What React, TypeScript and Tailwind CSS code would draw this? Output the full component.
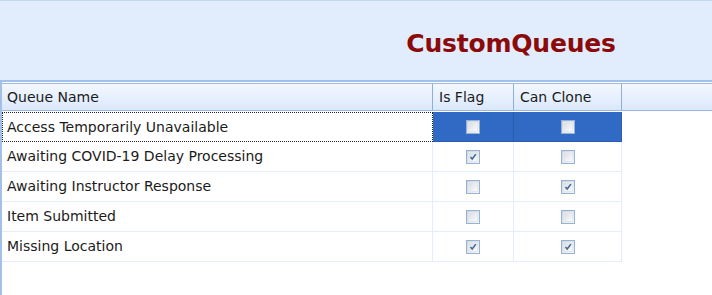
import React from "react";

type Row = { name: string; isFlag: boolean; canClone: boolean };

const rows: Row[] = [
  { name: "Access Temporarily Unavailable", isFlag: false, canClone: false },
  { name: "Awaiting COVID-19 Delay Processing", isFlag: true, canClone: false },
  { name: "Awaiting Instructor Response", isFlag: false, canClone: true },
  { name: "Item Submitted", isFlag: false, canClone: false },
  { name: "Missing Location", isFlag: true, canClone: true },
];

function CheckBox({ checked }: { checked: boolean }) {
  return (
    <span className="flex h-[14px] w-[14px] items-center justify-center border border-[#97b2d2] bg-gradient-to-br from-[#c9d2dc] to-[#f7f8fa] p-[1px]">
      <span className="flex h-full w-full items-center justify-center border border-[#e3e8ee] bg-gradient-to-br from-[#d9dee5] to-[#fafbfc]">
        {checked && (
          <svg width="10" height="10" viewBox="0 0 10 10">
            <path d="M1.8 5 L4 7.6 L8.6 1.4" stroke="#44689a" strokeWidth="2" fill="none" />
          </svg>
        )}
      </span>
    </span>
  );
}

export default function App() {
  return (
    <div
      className="flex h-[295px] w-[712px] flex-col overflow-hidden bg-[#e3eefd] text-[#1b1b1b]"
      style={{ fontFamily: '"DejaVu Sans", sans-serif' }}
    >
      <div className="flex h-[80px] items-start justify-center border-t border-[#c4d8f2] bg-[#e1edfd]">
        <h1 className="ml-[310px] mt-[30px] text-[25px] font-bold leading-none tracking-[-0.2px] text-[#8b0a0a]">
          CustomQueues
        </h1>
      </div>

      <div className="flex flex-1 flex-col border-l-2 border-t-2 border-[#a3c1e8] bg-white pt-[1px]">
        <div className="flex h-[28px] border-y border-[#9ab8e0] bg-gradient-to-b from-[#f3f8ff] to-[#dbe8fb] text-[14px]">
          <div className="flex w-[431px] items-center border-r border-[#8eafdd] pl-[5px]">Queue Name</div>
          <div className="flex w-[81px] items-center border-r border-[#8eafdd] pl-[6px]">Is Flag</div>
          <div className="flex w-[108px] items-center border-r border-[#8eafdd] pl-[6px]">Can Clone</div>
          <div className="flex-1" />
        </div>

        <div className="h-[1px]" />

        {rows.map((r, i) => {
          const selected = i === 0;
          return (
            <div key={r.name} className="flex h-[30px] text-[14px]">
              <div
                className={
                  selected
                    ? "flex w-[431px] items-center border border-dotted border-[#222] pl-[4px]"
                    : "flex w-[431px] items-center border-b border-r border-[#e4eefb] pl-[5px]"
                }
              >
                {r.name}
              </div>
              <div
                className={
                  selected
                    ? "flex w-[81px] items-center justify-center border-b border-r border-[#2a5cb0] bg-[#316ac5]"
                    : "flex w-[81px] items-center justify-center border-b border-r border-[#e4eefb]"
                }
              >
                <CheckBox checked={r.isFlag} />
              </div>
              <div
                className={
                  selected
                    ? "flex w-[108px] items-center justify-center border-b border-r border-[#2a5cb0] bg-[#316ac5]"
                    : "flex w-[108px] items-center justify-center border-b border-r border-[#e4eefb]"
                }
              >
                <CheckBox checked={r.canClone} />
              </div>
            </div>
          );
        })}
      </div>
    </div>
  );
}
